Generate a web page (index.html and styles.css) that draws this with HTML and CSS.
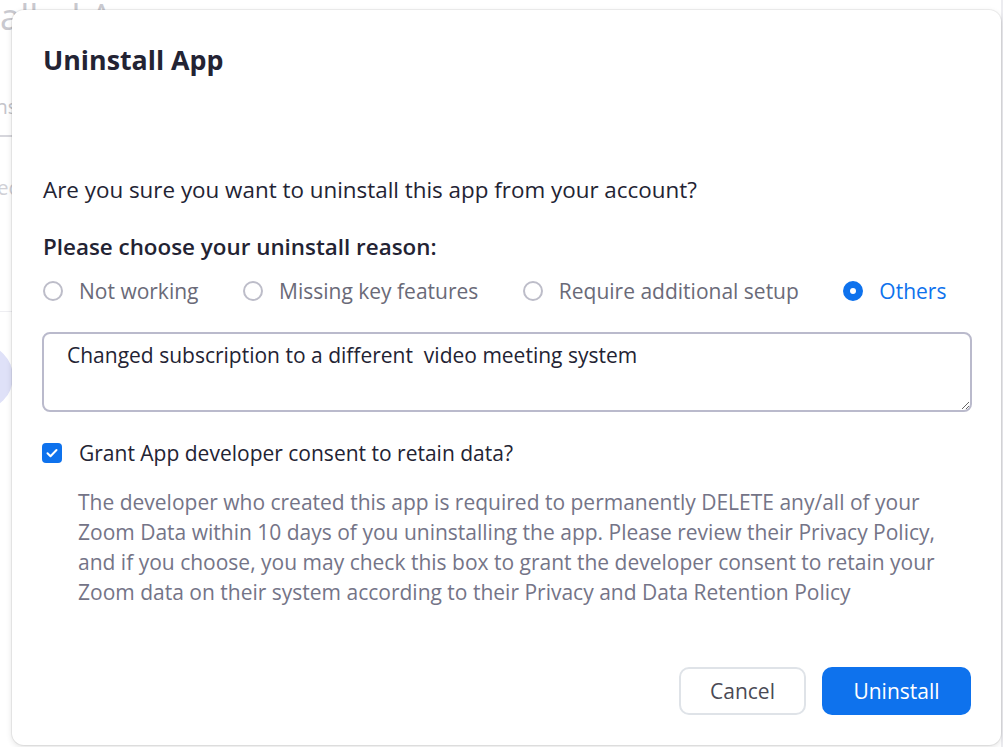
FILE: index.html
```html
<!DOCTYPE html>
<html lang="en">
<head>
<meta charset="utf-8">
<title>Uninstall App</title>
<link rel="stylesheet" href="styles.css">
</head>
<body>
<div class="page">
  <h1 class="page-title">Installed Apps</h1>
  <div class="page-tabs"><span class="tab">Installed</span></div>
  <div class="page-row">Selected apps</div>
  <div class="page-divider"></div>
  <div class="page-avatar"></div>
</div>
<div class="scrollbar"></div>

<div class="modal" role="dialog" aria-labelledby="dlg-title">
  <h2 class="modal-title" id="dlg-title">Uninstall App</h2>
  <p class="question">Are you sure you want to uninstall this app from your account?</p>
  <p class="reason-label">Please choose your uninstall reason:</p>
  <div class="reasons">
    <label class="radio"><span class="radio-dot"></span><span class="radio-text">Not working</span></label>
    <label class="radio"><span class="radio-dot"></span><span class="radio-text">Missing key features</span></label>
    <label class="radio"><span class="radio-dot"></span><span class="radio-text">Require additional setup</span></label>
    <label class="radio checked"><span class="radio-dot"></span><span class="radio-text">Others</span></label>
  </div>
  <textarea class="reason-text">Changed subscription to a different  video meeting system</textarea>
  <label class="consent">
    <span class="checkbox"><svg viewBox="0 0 20 20" width="20" height="20"><path d="M5.5 10.2l3 3 6-6.2" fill="none" stroke="#fff" stroke-width="2" stroke-linecap="round" stroke-linejoin="round"/></svg></span>
    <span class="consent-text">Grant App developer consent to retain data?</span>
  </label>
  <p class="consent-desc">The developer who created this app is required to permanently DELETE any/all of your Zoom Data within 10 days of you uninstalling the app. Please review their Privacy Policy, and if you choose, you may check this box to grant the developer consent to retain your Zoom data on their system according to their Privacy and Data Retention Policy</p>
  <div class="actions">
    <button class="btn btn-cancel" type="button">Cancel</button>
    <button class="btn btn-primary" type="button">Uninstall</button>
  </div>
</div>
</body>
</html>
```

FILE: styles.css
```css
* { box-sizing: border-box; }
html, body {
  margin: 0;
  padding: 0;
  width: 1003px;
  height: 747px;
  overflow: hidden;
  background: #ffffff;
  font-family: "Open Sans", "Liberation Sans", sans-serif;
}

/* faded page behind the dialog */
.page {
  color: #c9c9cf;
  margin-left: -76px;
}
.page-title {
  margin: -3px 0 0 14px;
  font-size: 36px;
  font-weight: 400;
  line-height: 40px;
  color: #c9c9cf;
  white-space: nowrap;
}
.page-tabs {
  margin: 47px 0 0 66px;
  height: 53px;
  padding-bottom: 5px;
  border-bottom: 2px solid #d6d6dc;
  font-size: 20px;
  line-height: 46px;
  width: 110px;
  color: #c4c4ca;
  white-space: nowrap;
}
.page-row {
  margin: 36px 0 0 46px;
  font-size: 20px;
  line-height: 30px;
  color: #d0d0d6;
  white-space: nowrap;
}
.page-divider {
  margin-top: 108px;
  width: 92px;
  border-top: 1px solid #eeeef2;
}
.page-avatar {
  margin-top: 32px;
  margin-left: 23px;
  width: 66px;
  height: 66px;
  border-radius: 50%;
  background: #dfe1f8;
}
.scrollbar {
  position: absolute;
  top: 0;
  right: 0;
  width: 2px;
  height: 747px;
  background: #ececf0;
}

/* dialog */
.modal {
  position: absolute;
  left: 12px;
  top: 10px;
  width: 989px;
  height: 735px;
  background: #fff;
  border-radius: 12px;
  box-shadow: 0 0 0 1px rgba(0,0,0,0.06), 0 2px 6px rgba(0,0,0,0.12);
  padding: 32px 30px 30px 31px;
  display: flex;
  flex-direction: column;
  color: #232333;
}
.modal-title {
  margin: 0;
  font-size: 26.8px;
  font-weight: 700;
  line-height: 36px;
  color: #232333;
}
.question {
  margin: 97px 0 0 0;
  font-size: 22.4px;
  line-height: 30px;
  color: #232333;
}
.reason-label {
  margin: 27px 0 0 0;
  font-size: 22.4px;
  font-weight: 600;
  line-height: 30px;
  color: #232333;
}
.reasons {
  margin-top: 14px;
  display: flex;
  gap: 44.5px;
  height: 30px;
  align-items: center;
}
.radio {
  display: flex;
  align-items: center;
  gap: 16px;
  font-size: 21px;
  line-height: 30px;
  color: #6a6a78;
}
.radio-dot {
  width: 20px;
  height: 20px;
  border-radius: 50%;
  border: 2px solid #bdbdc9;
  flex: none;
  display: flex;
  align-items: center;
  justify-content: center;
}
.radio.checked .radio-dot {
  border-color: #0e72ed;
  background: #0e72ed;
}
.radio.checked .radio-dot::after {
  content: "";
  width: 6px;
  height: 6px;
  border-radius: 50%;
  background: #fff;
}
.radio.checked .radio-text { color: #0e72ed; }

.reason-text {
  margin-top: 26px;
  margin-left: -1px;
  width: 930px;
  height: 80px;
  border: 2px solid #babacc;
  border-radius: 8px;
  padding: 9px 23px;
  font-family: "Open Sans", "Liberation Sans", sans-serif;
  font-size: 21px;
  line-height: 24px;
  color: #232333;
  resize: vertical;
  outline: none;
}
.consent {
  margin-top: 26px;
  display: flex;
  align-items: center;
  gap: 16px;
  height: 30px;
  font-size: 21px;
  line-height: 30px;
  color: #232333;
}
.checkbox {
  width: 20px;
  height: 20px;
  margin-left: -1px;
  border-radius: 4px;
  background: #0e72ed;
  flex: none;
  display: flex;
}
.consent-text { margin-left: 1px; }
.consent-desc {
  margin: 19px 0 0 35px;
  font-size: 21px;
  line-height: 30px;
  color: #747487;
  max-width: 880px;
}
.actions {
  margin-top: auto;
  display: flex;
  justify-content: flex-end;
  gap: 16px;
}
.btn {
  height: 48px;
  border-radius: 10px;
  font-family: "Open Sans", "Liberation Sans", sans-serif;
  font-size: 21px;
  line-height: 24px;
  padding: 0;
  cursor: pointer;
}
.btn-cancel {
  width: 127px;
  background: #fff;
  border: 2px solid #dfe3e8;
  color: #4a4a55;
}
.btn-primary {
  width: 149px;
  background: #0e72ed;
  border: none;
  color: #fff;
}
```
